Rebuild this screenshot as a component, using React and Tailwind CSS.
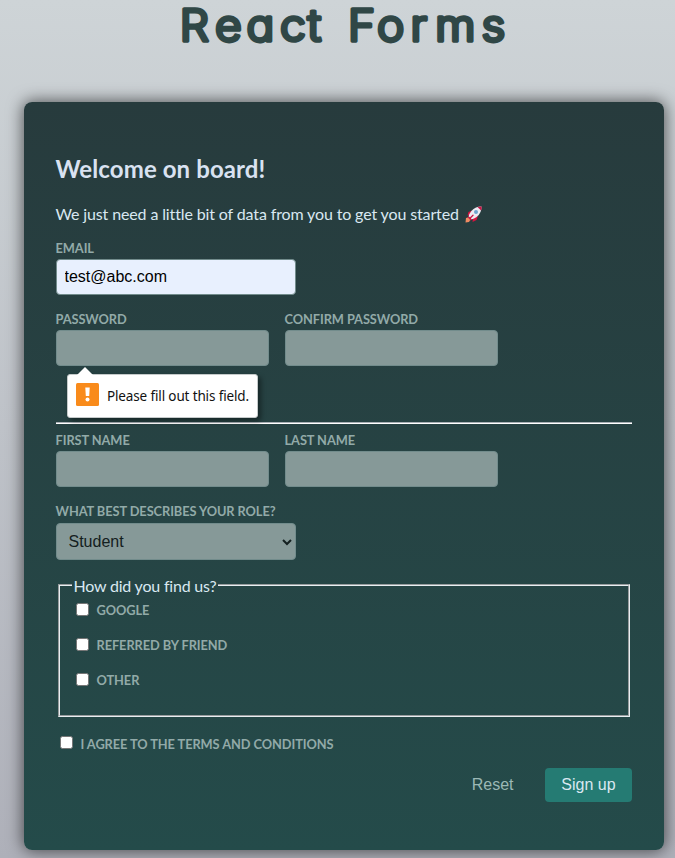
import React from "react";

const labelText = "-ml-[0.5px] font-['Lato'] text-[12.8px] leading-4 font-bold tracking-[-0.07px] uppercase text-[#92aaa8]";

function Field({ label, width, type = "text", value = "", filled = false }) {
  return (
    <label className={"flex flex-col gap-[3px] " + width}>
      <span className={labelText}>{label}</span>
      <input
        type={type}
        defaultValue={value}
        className={
          "h-9 w-full rounded border border-[#728c8c] px-[7.5px] font-['Liberation_Sans'] text-base text-black outline-none " +
          (filled ? "bg-[#e8f0fe]" : "bg-[#869998]")
        }
      />
    </label>
  );
}

function Check({ label, boxClass = "" }) {
  return (
    <label className="flex h-[35px] items-start gap-2">
      <span className={"size-[13px] shrink-0 rounded-[2.5px] border border-[#767676] bg-white " + boxClass} />
      <span className={labelText}>{label}</span>
    </label>
  );
}

function Rocket() {
  return (
    <svg className="ml-[6px] mt-[6px] size-[17px]" viewBox="0 0 17 17" aria-hidden="true">
      <path d="M7 4.500 L3.500 6 L2.500 9.500 L5 9 M13 10 L11.500 14 L7.500 16 L8 12" fill="#d9123f" />
      <path d="M3.500 10.500 Q5.500 4 11 1.500 Q14 .3 16.500 .5 Q16.700 3 15.500 6 Q13 11.500 6.500 13.500 Z" fill="#eceaf2" />
      <path d="M12.500 .9 Q14.500 .3 16.600 .4 Q16.800 2.500 16.100 4.500 Z" fill="#c91645" />
      <path d="M3.500 10 L7 13.600 L5.300 14.600 L2.500 11.700 Z" fill="#c91645" />
      <path d="M8 9.300 L5 12.300" stroke="#c91645" strokeWidth="1.300" strokeLinecap="round" />
      <path d="M1 12 L3 11.500 L5.300 14 L4 16 L.5 16.500 Z" fill="#f08a62" />
      <circle cx="11" cy="5.900" r="2" fill="#6ea3cf" />
    </svg>
  );
}

function ValidationBubble() {
  return (
    <div className="absolute left-[11px] top-[63px] z-10 h-[44px] w-[191px] rounded-[3px] border border-[#c5caca] bg-white shadow-[3px_3px_5px_rgba(0,0,0,0.4)]">
      <svg className="absolute -top-[8px] left-[8px] h-[9px] w-[18px]" viewBox="0 0 18 9">
        <path d="M0 9 L9 0 L18 9 Z" fill="#fff" />
      </svg>
      <div className="flex items-start pl-2 pt-2">
        <svg className="size-[23px]" viewBox="0 0 23 23">
          <rect width="23" height="23" rx="1.500" fill="#f98b1b" />
          <path d="M9.300 4.500 H13.700 L13.200 13 H9.800 Z" fill="#fff" />
          <circle cx="11.500" cy="16.400" r="2" fill="#fff" />
        </svg>
        <span className="ml-2 mt-[3px] whitespace-nowrap font-['Noto_Sans'] text-[13.5px] leading-[20px] tracking-[-0.14px] text-[#111]">
          Please fill out this field.
        </span>
      </div>
    </div>
  );
}

export default function App() {
  return (
    <main className="h-[858px] w-[675px] overflow-hidden bg-linear-to-b from-[#ced4d7] to-[#aeb0b9] font-['Lato']">
      <h1 className="h-[102px]">
        <svg className="h-[60px] w-full overflow-visible" viewBox="0 0 675 60">
          <text
            transform="scale(1.06 1)"
            x="169.500 202.800 232.500 264.200 290 311 328.300 355.700 387.300 410.600 454.200"
            y="40.500"
            className="font-['Inter'] text-[43.5px] font-light [font-feature-settings:'cv11']"
            fill="#304746"
            stroke="#304746"
            strokeWidth="3.600"
            strokeLinejoin="round"
          >
            React Forms
          </text>
        </svg>
      </h1>
      <form className="ml-6 h-[748px] w-[640px] rounded-lg bg-linear-to-b from-[#273b3d] to-[#244b4a] px-8 pt-[49px] shadow-[0_0_16px_1px_rgba(0,0,0,0.6)]">
        <h2 className="-ml-[0.5px] text-[24px] leading-9 font-bold tracking-[0.1px] text-[#d9e2f1]">Welcome on board!</h2>
        <p className="-ml-[0.5px] mt-[13px] flex h-7 text-base leading-7 tracking-[-0.13px] text-[#d9e8f1]">
          We just need a little bit of data from you to get you started
          <Rocket />
        </p>
        <div className="mt-3">
          <Field label="Email" width="w-[240px]" type="email" value="test@abc.com" filled />
        </div>
        <div className="relative mt-4 flex gap-4">
          <Field label="Password" width="w-[213px]" type="password" />
          <Field label="Confirm Password" width="w-[213px]" type="password" />
          <ValidationBubble />
        </div>
        <hr className="mt-[56px] h-0.5 border-t border-b border-t-[#a8aeb4] border-b-white" />
        <div className="mt-2 flex gap-4">
          <Field label="First Name" width="w-[213px]" />
          <Field label="Last Name" width="w-[213px]" />
        </div>
        <label className="mt-4 flex w-[240px] flex-col gap-1">
          <span className={labelText}>What best describes your role?</span>
          <span className="flex h-[37px] items-center justify-between rounded border border-[#728c8c] bg-[#869998] pl-[11.5px] pr-[3px] font-['Liberation_Sans'] text-base text-[#142020]">
            Student
            <svg className="size-[10px]" viewBox="0 0 10 10">
              <path d="M1 3 L5 7 L9 3" fill="none" stroke="#142020" strokeWidth="2" />
            </svg>
          </span>
        </label>
        <fieldset className="mx-[2px] mt-[13px] h-[144px] border-2 border-[#e8eef1] px-4 [border-style:groove]">
          <legend className="-ml-[4px] h-6 px-[1.5px] pt-[2px] text-base leading-[22px] tracking-[-0.2px] text-[#d9e8f1]">
            How did you find us?
          </legend>
          <div className="pt-[5px]">
            <Check label="Google" boxClass="mt-px" />
            <Check label="Referred by friend" boxClass="mt-px" />
            <Check label="Other" boxClass="mt-px" />
          </div>
        </fieldset>
        <div className="ml-1 mt-[19px]">
          <Check label="I agree to the terms and conditions" />
        </div>
        <div className="-mt-[3px] flex justify-end font-['Liberation_Sans'] text-base">
          <button type="button" className="h-[34px] px-4 text-[#9bb8b5]">Reset</button>
          <button type="button" className="ml-[15.5px] h-[34px] w-[87px] rounded bg-[#257b73] text-[#d9e8f1]">Sign up</button>
        </div>
      </form>
    </main>
  );
}
